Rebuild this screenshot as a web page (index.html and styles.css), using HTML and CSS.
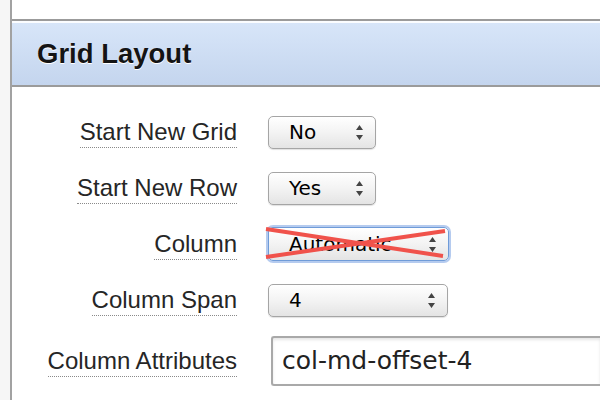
FILE: index.html
```html
<!DOCTYPE html>
<html lang="en">
<head>
<meta charset="utf-8">
<title>Grid Layout</title>
<link rel="stylesheet" href="styles.css">
</head>
<body>
<div class="page">
  <aside class="gutter"></aside>
  <main class="panel">
    <header class="panel-head">
      <h2 class="panel-title">Grid Layout</h2>
    </header>
    <div class="form">
      <label class="lbl"><span class="lbl-text">Start New Grid</span></label>
      <div class="field">
        <div class="select w-sm"><span class="select-val">No</span>
          <svg class="arrows" width="7" height="15" viewBox="0 0 7 15"><path d="M0 5L3.5 0L7 5Z M0 10L7 10L3.5 15Z"/></svg>
        </div>
      </div>

      <label class="lbl"><span class="lbl-text">Start New Row</span></label>
      <div class="field">
        <div class="select w-sm"><span class="select-val">Yes</span>
          <svg class="arrows" width="7" height="15" viewBox="0 0 7 15"><path d="M0 5L3.5 0L7 5Z M0 10L7 10L3.5 15Z"/></svg>
        </div>
      </div>

      <label class="lbl"><span class="lbl-text">Column</span></label>
      <div class="field">
        <div class="select w-lg focus"><span class="select-val">Automatic</span>
          <svg class="arrows" width="7" height="15" viewBox="0 0 7 15"><path d="M0 5L3.5 0L7 5Z M0 10L7 10L3.5 15Z"/></svg>
          <svg class="cross" width="182" height="34" viewBox="0 0 182 34"><path d="M-3 1L174 28 M-3 29L176 3"/></svg>
        </div>
      </div>

      <label class="lbl"><span class="lbl-text">Column Span</span></label>
      <div class="field">
        <div class="select w-md"><span class="select-val">4</span>
          <svg class="arrows" width="7" height="15" viewBox="0 0 7 15"><path d="M0 5L3.5 0L7 5Z M0 10L7 10L3.5 15Z"/></svg>
        </div>
      </div>

      <label class="lbl"><span class="lbl-text">Column Attributes</span></label>
      <div class="field">
        <input class="text-input" type="text" value="col-md-offset-4">
      </div>
    </div>
  </main>
</div>
</body>
</html>
```

FILE: styles.css
```css
html, body {
  margin: 0;
  padding: 0;
  background: #fff;
}
body {
  width: 600px;
  height: 400px;
  overflow: hidden;
  font-family: "Liberation Sans", Arial, sans-serif;
}
.page {
  display: flex;
  height: 400px;
}
.gutter {
  width: 10px;
  flex: none;
  background: #f6f6f6;
  border-right: 2px solid #a2a2a2;
}
.panel {
  flex: 1;
  min-width: 0;
}
.panel-head {
  margin-top: 19px;
  height: 62px;
  border-top: 2px solid #9b9b9b;
  border-bottom: 2px solid #9b9b9b;
  background: linear-gradient(#d8e6f9, #c4d5ee);
  box-shadow: inset 0 2px 0 rgba(255,255,255,0.9);
  display: flex;
  align-items: center;
  padding-left: 25px;
  padding-top: 2px;
}
.panel-title {
  margin: 0;
  font-size: 27.5px;
  font-weight: bold;
  color: #141414;
  text-shadow: 0 1px 0 #fff;
}
.form {
  display: grid;
  grid-template-columns: 225px 1fr;
  grid-template-rows: repeat(4, 56px) 65px;
  column-gap: 31px;
  padding-top: 17px;
}
.lbl {
  justify-self: end;
  align-self: center;
}
.lbl-text {
  display: inline-block;
  font-size: 24px;
  line-height: 24px;
  padding-top: 4px;
  padding-bottom: 3px;
  color: #262626;
  border-bottom: 1px dotted #8a8a8a;
}
.field {
  align-self: center;
  min-width: 0;
}
.select {
  position: relative;
  box-sizing: border-box;
  height: 33px;
  display: flex;
  align-items: center;
  justify-content: space-between;
  padding: 0 12px 0 20px;
  border: 1px solid #a5a5a5;
  border-radius: 5px;
  background: linear-gradient(#ffffff, #f3f3f3 50%, #e4e4e4);
  box-shadow: 0 1px 1px rgba(0,0,0,0.12);
  font-family: "DejaVu Sans", Verdana, sans-serif;
  font-size: 20px;
  color: #000;
}
.w-sm { width: 108px; }
.w-md { width: 180px; }
.w-lg { width: 181px; height: 34px; }
.select.focus {
  border-color: #6f9bd8;
  box-shadow: 0 0 0 2px rgba(120,160,225,0.55);
}
.arrows {
  fill: #444;
  flex: none;
}
.cross {
  position: absolute;
  left: 0;
  top: 0;
  overflow: visible;
}
.cross path {
  stroke: #f0524b;
  stroke-width: 4;
  fill: none;
}
.text-input {
  display: block;
  box-sizing: border-box;
  margin-left: 3px;
  width: calc(100% - 3px);
  height: 50px;
  border: 2px solid #a9a9a9;
  border-right: 0;
  border-radius: 3px 0 0 3px;
  box-shadow: inset 0 2px 3px rgba(0,0,0,0.1);
  padding: 0 0 0 9px;
  font-family: "DejaVu Sans", Verdana, sans-serif;
  font-size: 25px;
  color: #222;
  background: #fff;
  outline: none;
}
```
